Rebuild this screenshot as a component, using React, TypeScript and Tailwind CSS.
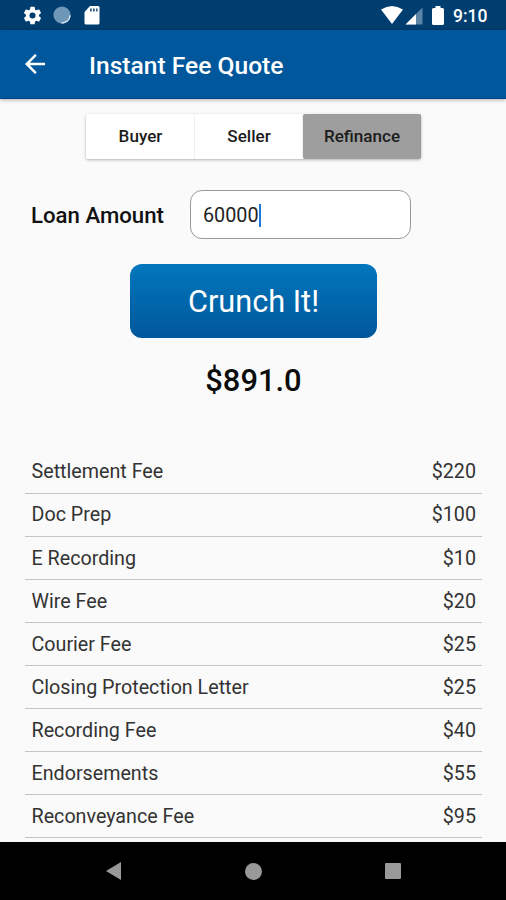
import React, { useState } from "react";

const fees = [
  { label: "Settlement Fee", amount: 220 },
  { label: "Doc Prep", amount: 100 },
  { label: "E Recording", amount: 10 },
  { label: "Wire Fee", amount: 20 },
  { label: "Courier Fee", amount: 25 },
  { label: "Closing Protection Letter", amount: 25 },
  { label: "Recording Fee", amount: 40 },
  { label: "Endorsements", amount: 55 },
  { label: "Reconveyance Fee", amount: 95 },
];

const tabs = [
  { name: "Buyer", width: "w-[109px]" },
  { name: "Seller", width: "w-[108px]" },
  { name: "Refinance", width: "w-[118px]" },
];

function StatusBar() {
  return (
    <div className="flex h-[30px] shrink-0 items-center bg-[#003e70] pl-[22px] pr-[18px] text-white">
      <svg className="h-[21px] w-[21px]" viewBox="0 0 24 24" fill="currentColor">
        <path d="M19.43 12.98c.04-.32.07-.64.07-.98s-.03-.66-.07-.98l2.11-1.65a.5.5 0 0 0 .12-.64l-2-3.46a.5.5 0 0 0-.61-.22l-2.49 1a7.3 7.3 0 0 0-1.69-.98l-.38-2.65A.49.49 0 0 0 14 2h-4a.49.49 0 0 0-.49.42l-.38 2.65c-.61.25-1.17.59-1.69.98l-2.49-1a.49.49 0 0 0-.61.22l-2 3.46a.49.49 0 0 0 .12.64l2.11 1.65c-.04.32-.07.65-.07.98s.03.66.07.98l-2.11 1.65a.5.5 0 0 0-.12.64l2 3.46c.12.22.39.3.61.22l2.49-1c.52.4 1.08.73 1.69.98l.38 2.65c.03.24.24.42.49.42h4c.25 0 .46-.18.49-.42l.38-2.65c.61-.25 1.17-.59 1.69-.98l2.49 1c.23.09.49 0 .61-.22l2-3.46a.5.5 0 0 0-.12-.64zM12 15.5a3.5 3.5 0 1 1 0-7 3.5 3.5 0 0 1 0 7z" />
      </svg>
      <svg className="ml-[10px] h-[18px] w-[18px]" viewBox="0 0 18 18">
        <circle cx="9" cy="9" r="8.6" fill="#6f97b7" />
        <path d="M17 10a8 8 0 0 1-8 7" fill="none" stroke="#dce8f2" strokeWidth="1.4" strokeLinecap="round" />
      </svg>
      <svg className="ml-[13px] h-[19px] w-[16px]" viewBox="0 0 16 19">
        <path d="M6 0H14Q15.500 0 15.500 1.500V17Q15.500 18.500 14 18.500H2Q.5 18.500 .5 17V6Z" fill="currentColor" />
        <path d="M6 2.500h1.800v3H6zM9 2.500h1.800v3H9zM12 2.500h1.600v3H12z" fill="#315f87" />
      </svg>
      <svg className="ml-auto h-[18px] w-[22px]" viewBox="0 0 22 18" fill="currentColor">
        <path d="M0 3.500Q11-3.500 22 3.500L11 18Z" />
      </svg>
      <svg className="ml-[2px] mt-px h-[18px] w-[18px]" viewBox="0 0 18 18">
        <path d="M17.500.5V17.500H.5Z" fill="#5b84a6" />
        <path d="M11 7V17.500H.5Z" fill="white" />
      </svg>
      <svg className="ml-[9px] h-[19px] w-[12px]" viewBox="0 0 12 19" fill="currentColor">
        <path d="M3.500 0h5v2H10.500Q12 2 12 3.500V17.500Q12 19 10.500 19H1.500Q0 19 0 17.500V3.500Q0 2 1.500 2H3.500Z" />
      </svg>
      <span className="ml-[9px] w-[35px] whitespace-nowrap pt-[3px] text-[17.5px] font-medium leading-none">9:10</span>
    </div>
  );
}

function AppBar() {
  return (
    <header className="relative flex h-[69px] shrink-0 items-center border-b border-[#004488] bg-[#01579b] pl-[25px] text-white shadow-[0_1px_4px_rgba(0,0,0,0.3)]">
      <svg className="h-[20px] w-[20px]" viewBox="4 4 16 16" fill="currentColor">
        <path d="M20 11H7.830l5.590-5.590L12 4l-8 8 8 8 1.410-1.410L7.830 13H20v-2z" />
      </svg>
      <h1 className="ml-[44px] pt-[4px] text-[24.6px] font-medium leading-[30px]">Instant Fee Quote</h1>
    </header>
  );
}

function NavigationBar() {
  return (
    <nav className="flex h-[58px] shrink-0 items-center bg-black pl-[106px] pr-[105px]">
      <svg className="h-[18px] w-[15px]" viewBox="0 0 15 18" fill="#999999">
        <path d="M0 9L15 0V18Z" />
      </svg>
      <div className="ml-[124px] h-[17px] w-[17px] rounded-full bg-[#999]" />
      <div className="ml-auto h-[16px] w-[16px] rounded-[1px] bg-[#999]" />
    </nav>
  );
}

export default function App() {
  const [selected, setSelected] = useState("Refinance");
  return (
    <div className="flex h-[900px] w-[506px] flex-col overflow-hidden bg-[#fafafa] font-['Roboto','Liberation_Sans',sans-serif]">
      <StatusBar />
      <AppBar />
      <main className="flex min-h-0 flex-1 flex-col overflow-hidden">
        <div className="ml-[86px] mt-[15px] flex h-[45px] w-[335px] shrink-0 rounded-[2px] bg-white shadow-[0_1px_3px_rgba(0,0,0,0.3)]">
          {tabs.map((tab) => (
            <button
              key={tab.name}
              onClick={() => setSelected(tab.name)}
              className={`${tab.width} h-full rounded-[2px] border-r border-[#eeeeee] pt-px pl-px text-[17.1px] font-medium text-[#1c1c1c] last:border-[#999] ${selected === tab.name ? "bg-[#9e9e9e]" : "bg-white"}`}
            >
              {tab.name}
            </button>
          ))}
        </div>
        <div className="mt-[31px] flex h-[49px] shrink-0 items-center pl-[31px]">
          <label className="w-[159px] pt-[2px] text-[22.2px] font-medium text-[#111]">Loan Amount</label>
          <div className="flex h-[49px] w-[221px] items-center rounded-[12px] border border-[#999] bg-white pl-[12px] pt-[2px]">
            <span className="text-[19.8px] text-[#222]">60000</span>
            <span className="h-[23px] w-[2px] bg-[#2078d8]" />
          </div>
        </div>
        <button className="ml-[130px] mt-[25px] h-[74px] w-[247px] shrink-0 rounded-[12px] bg-linear-to-b from-[#0277bd] to-[#01579b] pt-[2px] text-[30.7px] text-white">
          Crunch It!
        </button>
        <div className="mt-[25px] h-[36px] w-full shrink-0 pl-px text-center text-[30.9px] font-medium leading-[36px] text-[#0c0c0c]">$891.0</div>
        <ul className="ml-[25px] mr-[24px] mt-[51.6px] shrink-0">
          {fees.map((fee) => (
            <li key={fee.label} className="flex h-[43.1px] items-center justify-between border-b border-[#c4c4c4] pl-[6.500px] pr-[6px] pt-px text-[19.7px] text-[#333]">
              <span>{fee.label}</span>
              <span>${fee.amount}</span>
            </li>
          ))}
        </ul>
      </main>
      <NavigationBar />
    </div>
  );
}
